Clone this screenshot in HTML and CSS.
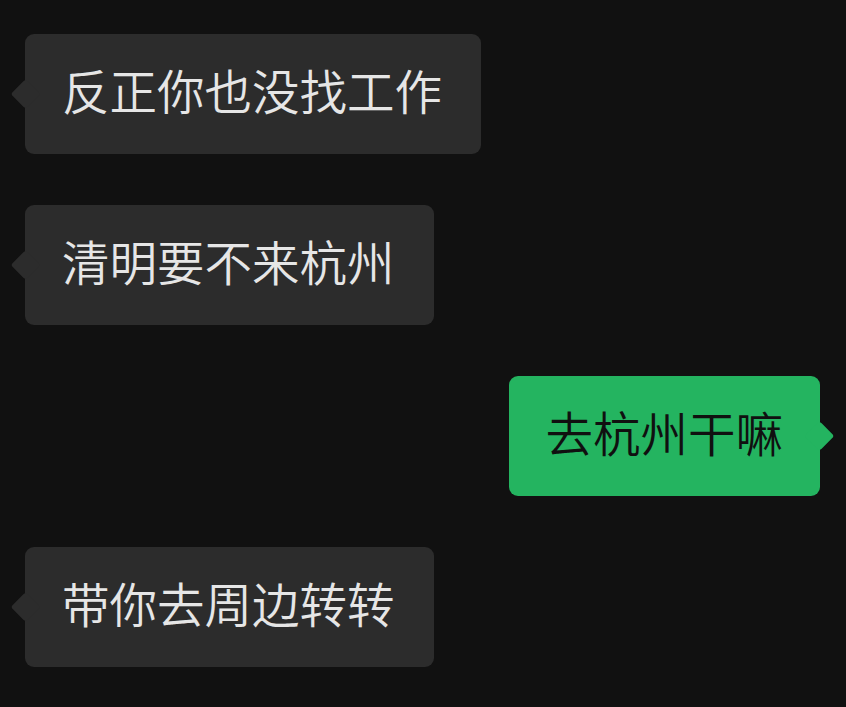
FILE: index.html
```html
<!DOCTYPE html>
<html lang="zh-CN">
<head>
    <meta charset="UTF-8">
    <meta name="viewport" content="width=device-width, initial-scale=1.0">
    <title>聊天</title>
    <link rel="stylesheet" href="styles.css">
</head>
<body>
    <!-- 聊天记录 -->
    <div class="chat">
        <div class="row left"><div class="bubble">反正你也没找工作</div></div>
        <div class="row left"><div class="bubble">清明要不来杭州</div></div>
        <div class="row right"><div class="bubble">去杭州干嘛</div></div>
        <div class="row left"><div class="bubble">带你去周边转转</div></div>
    </div>
</body>
</html>
```

FILE: styles.css
```css
/* 基本样式 */
body {
    margin: 0;
    height: 707px;
    background-color: #111111;
    font-family: "Noto Sans CJK SC", "Noto Sans", sans-serif;
    overflow: hidden;
}

.chat {
    display: flex;
    flex-direction: column;
    gap: 51px;
    padding: 34px 26px 0 25px;
}

.row {
    display: flex;
}
.row.right {
    justify-content: flex-end;
}

/* 气泡 */
.bubble {
    position: relative;
    height: 112px;
    line-height: 112px;
    padding: 0 39px 8px 37px;
    font-size: 47.5px;
    font-weight: 350;
    border-radius: 9px;
    background-color: #2c2c2c;
    color: #e6e6e6;
    white-space: nowrap;
}
.bubble::before {
    content: "";
    position: absolute;
    top: 50%;
    width: 21px;
    height: 21px;
    border-radius: 3px;
    background-color: inherit;
    transform: translateY(-50%) rotate(45deg);
}
.left .bubble::before {
    left: -10px;
}
.right .bubble {
    padding-left: 37px;
    padding-right: 37px;
    background-color: #24b460;
    color: #101010;
}
.right .bubble::before {
    right: -10px;
}
```
